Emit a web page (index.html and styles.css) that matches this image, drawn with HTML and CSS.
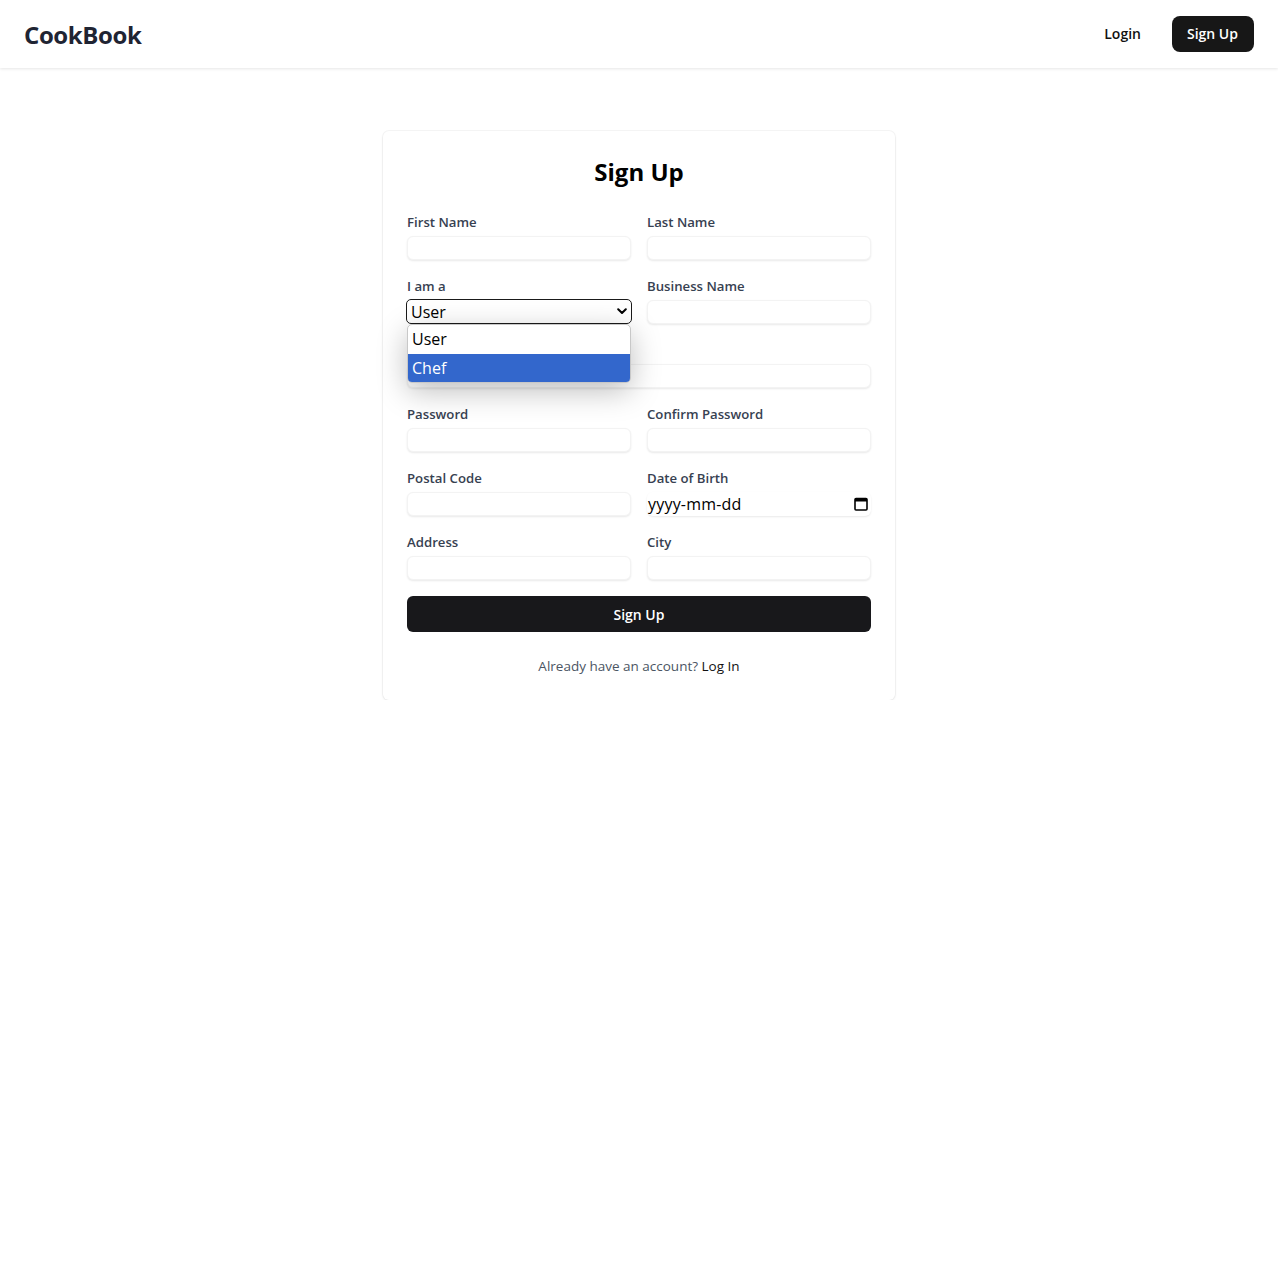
FILE: index.html
```html
<!DOCTYPE html>
<html lang="en">
<head>
<meta charset="utf-8">
<title>CookBook - Sign Up</title>
<link rel="stylesheet" href="styles.css">
</head>
<body>
<header class="topbar">
  <div class="logo">CookBook</div>
  <nav class="nav">
    <a class="nav-login" href="#">Login</a>
    <a class="nav-signup" href="#">Sign Up</a>
  </nav>
</header>
<main class="main">
  <section class="card">
    <h1 class="title">Sign Up</h1>
    <form class="grid">
      <div class="field"><label class="label">First Name</label><div class="input"></div></div>
      <div class="field"><label class="label">Last Name</label><div class="input"></div></div>
      <div class="field select-field">
        <label class="label">I am a</label>
        <div class="select"><span>User</span>
          <svg class="chev" width="10" height="7" viewBox="0 0 10 7"><polyline points="1.2,1.2 5,5 8.8,1.2" fill="none" stroke="#000" stroke-width="2" stroke-linecap="round" stroke-linejoin="round"/></svg>
        </div>
        <div class="popup">
          <div class="opt">User</div>
          <div class="opt opt-active">Chef</div>
        </div>
      </div>
      <div class="field"><label class="label">Business Name</label><div class="input"></div></div>
      <div class="field wide"><label class="label">Email</label><div class="input"></div></div>
      <div class="field"><label class="label">Password</label><div class="input"></div></div>
      <div class="field"><label class="label">Confirm Password</label><div class="input"></div></div>
      <div class="field"><label class="label">Postal Code</label><div class="input"></div></div>
      <div class="field"><label class="label">Date of Birth</label>
        <div class="input date"><span>yyyy-mm-dd</span>
          <svg class="cal" width="14" height="14" viewBox="0 0 14 14"><rect x="1" y="1.5" width="12" height="11.5" rx="1" fill="none" stroke="#000" stroke-width="1.6"/><rect x="1" y="1.5" width="12" height="3" fill="#000"/></svg>
        </div>
      </div>
      <div class="field"><label class="label">Address</label><div class="input"></div></div>
      <div class="field"><label class="label">City</label><div class="input"></div></div>
    </form>
    <button class="submit" type="button">Sign Up</button>
    <p class="foot">Already have an account? <a href="#" class="foot-link">Log In</a></p>
  </section>
</main>
</body>
</html>
```
FILE: styles.css
```css
* { box-sizing: border-box; }
body {
  margin: 0;
  background: #fff;
  font-family: "Open Sans", "Noto Sans", Arial, sans-serif;
  color: #111;
}
.topbar {
  height: 68px;
  display: flex;
  align-items: center;
  justify-content: space-between;
  padding: 0 24px;
  background: #fff;
  box-shadow: 0 1px 3px rgba(0,0,0,0.10);
}
.logo {
  font-size: 24px;
  font-weight: 700;
  line-height: 32px;
  color: #1f2433;
  margin-top: 2px;
  letter-spacing: -0.4px;
}
.nav { display: flex; align-items: center; gap: 31px; }
.nav a { text-decoration: none; font-size: 14px; font-weight: 600; line-height: 20px; }
.nav-login { color: #111; }
.nav-signup {
  background: #171717;
  color: #fff;
  padding: 8px 16px 8px 15px;
  border-radius: 8px;
  height: 36px;
  display: flex; align-items: center;
  margin-top: -1px;
}
.main { display: flex; justify-content: center; padding-top: 63px; }
.card {
  width: 512px;
  padding: 25px 24px 24px;
  border-radius: 6px;
  box-shadow: 0 0 0 1px rgba(0,0,0,0.035), 0 1px 3px rgba(0,0,0,0.07);
  background: #fff;
}
.title {
  margin: 0 0 24px;
  text-align: center;
  font-size: 24px;
  line-height: 32px;
  font-weight: 700;
  color: #000;
}
.grid {
  display: grid;
  grid-template-columns: 1fr 1fr;
  column-gap: 16px;
  row-gap: 16px;
  margin: 0;
}
.field { position: relative; display: flex; flex-direction: column; }
.wide { grid-column: 1 / span 2; }
.label {
  font-size: 13.2px;
  line-height: 20px;
  font-weight: 600;
  color: #374151;
  margin-bottom: 4px;
}
.input {
  height: 24px;
  border-radius: 6px;
  background: #fff;
  border: 1px solid #f3f3f3;
  box-shadow: 0 1px 2px rgba(0,0,0,0.09);
}
.date {
  display: flex; align-items: center; justify-content: space-between;
  padding: 0 3px 0 0;
  font-size: 16px;
  color: #000;
  border: none;
}
.date span { margin-left: 1px; letter-spacing: 0.2px; }
.cal { display: block; margin-top: -1px; }
.select {
  height: 25px;
  margin: -1px -1px 0 -1px;
  border: 1px solid #1a1a1a;
  border-radius: 5px;
  background: #fff;
  display: flex; align-items: center; justify-content: space-between;
  padding: 0 4px 0 4px;
  font-size: 16px;
  color: #000;
}
.chev { display: block; margin-right: 0; }
.popup {
  position: absolute;
  left: 0;
  top: 48px;
  width: 224px;
  background: #fff;
  border: 1px solid #c8c8c8;
  border-radius: 5px;
  overflow: hidden;
  box-shadow: 0 8px 30px rgba(0,0,0,0.26);
  z-index: 5;
}
.opt {
  height: 29px;
  line-height: 29px;
  padding: 0 4px;
  font-size: 16px;
  color: #000;
}
.opt-active { background: #3367cc; color: #fff; height: 28px; line-height: 28px; }
.submit {
  display: block;
  width: 100%;
  margin-top: 16px;
  height: 36px;
  border: none;
  border-radius: 6px;
  background: #18181b;
  color: #fff;
  font-family: inherit;
  font-size: 14px;
  font-weight: 600;
}
.foot {
  margin: 24px 0 0;
  text-align: center;
  font-size: 13.5px;
  line-height: 20px;
  color: #4b5563;
}
.foot-link { color: #111; text-decoration: none; }
```
